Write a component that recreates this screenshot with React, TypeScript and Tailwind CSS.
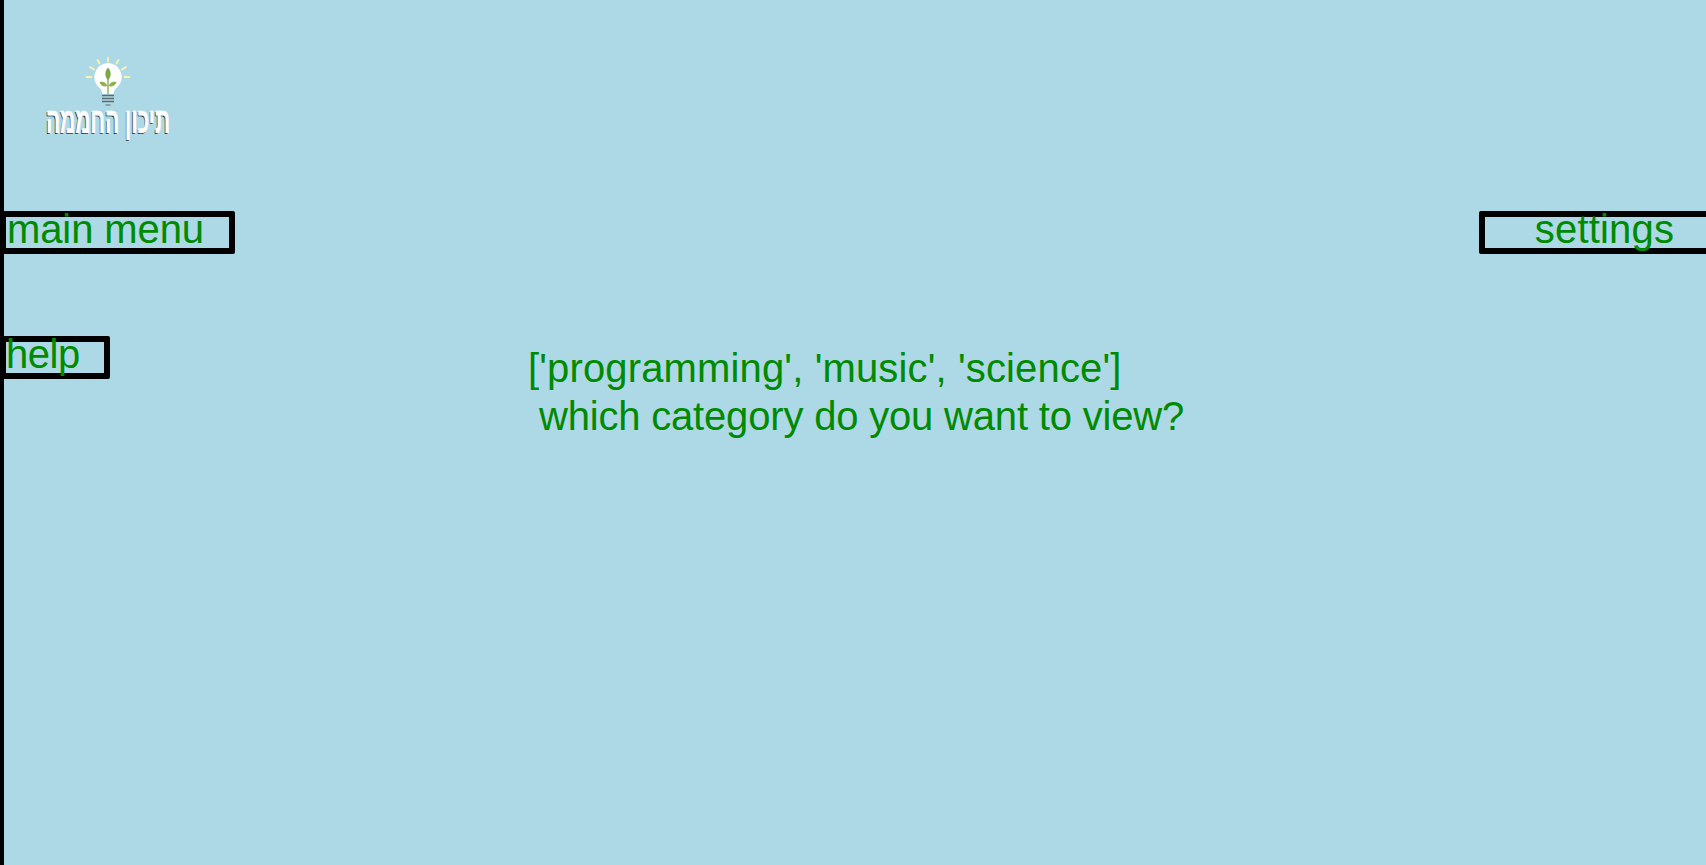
export default function App() {
  return (
    <div className="h-[865px] w-[1706px] overflow-hidden bg-[#add8e6] border-l-4 border-black font-['Liberation_Sans',Arial,sans-serif] text-[#008a00]">
      <div className="h-[211px] pt-[57px] pl-[42px]">
        <div className="flex w-[123px] flex-col items-center">
          <svg width="50" height="50" viewBox="0 0 50 50">
            <g stroke="#fbf6a8" strokeWidth="1.8" strokeLinecap="round">
              <path d="M25 1v3.500M14.500 3l2 3.500M35.500 3l-2 3.500M7 10l4 2.500M43 10l-4 2.500M3.500 20h5M46.500 20h-5" />
            </g>
            <path d="M25 6a14 14 0 0 0-9 24.500c2 1.800 3.200 3.500 3.400 6.500h11.200c.2-3 1.400-4.700 3.400-6.500a14 14 0 0 0-9-24.500z" fill="#ffffff" />
            <path d="M25 37V19" stroke="#7fa648" strokeWidth="1.300" />
            <path d="M25 23c-3.500-3-3.500-9 0-12.500 3.500 3.500 3.500 9.500 0 12.500z" fill="#7ba843" />
            <path d="M24.500 29c-1.500-3.500-4.500-5-8-3.800 1 3.300 4.500 5 8 3.800zM25.500 29c1.500-3.500 4.500-5 8-3.800-1 3.300-4.500 5-8 3.800z" fill="#8db24e" />
            <path d="M19 38.500h12M19 41.500h12M19 44.500h12" stroke="#5d6b70" strokeWidth="1.500" />
            <path d="M22.500 48h5" stroke="#5d6b70" strokeWidth="1" />
          </svg>
          <div dir="rtl" className="-mt-[1px] scale-x-[0.58] whitespace-nowrap text-[36px] leading-[30px] font-bold text-white [-webkit-text-stroke:0.7px_#fff] [text-shadow:-1px_1px_0_#000]">
            תיכון החממה
          </div>
        </div>
      </div>

      <div className="-ml-1 flex justify-between">
        <div className="h-[43px] w-[235px] rounded-[2px] border-[6px] border-black pl-[1px] text-[40px] leading-[24px] tracking-[-0.1px]">main menu</div>
        <div className="-mr-[24px] h-[43px] w-[251px] rounded-[2px] border-[6px] border-black text-center text-[40px] leading-[24px] tracking-[0.2px]">settings</div>
      </div>

      <div className="-ml-1 mt-[82px] flex items-start">
        <div className="h-[43px] w-[110px] rounded-[2px] border-[6px] border-black text-[40px] leading-[24px] tracking-[-0.5px]">help</div>
        <div className="ml-[418px] mt-[8px] whitespace-pre text-[40px] leading-[48px]">
          <div className="tracking-[0.15px]">{"['programming', 'music', 'science']"}</div>
          <div className="tracking-[-0.18px]">{" which category do you want to view?"}</div>
        </div>
      </div>
    </div>
  );
}
